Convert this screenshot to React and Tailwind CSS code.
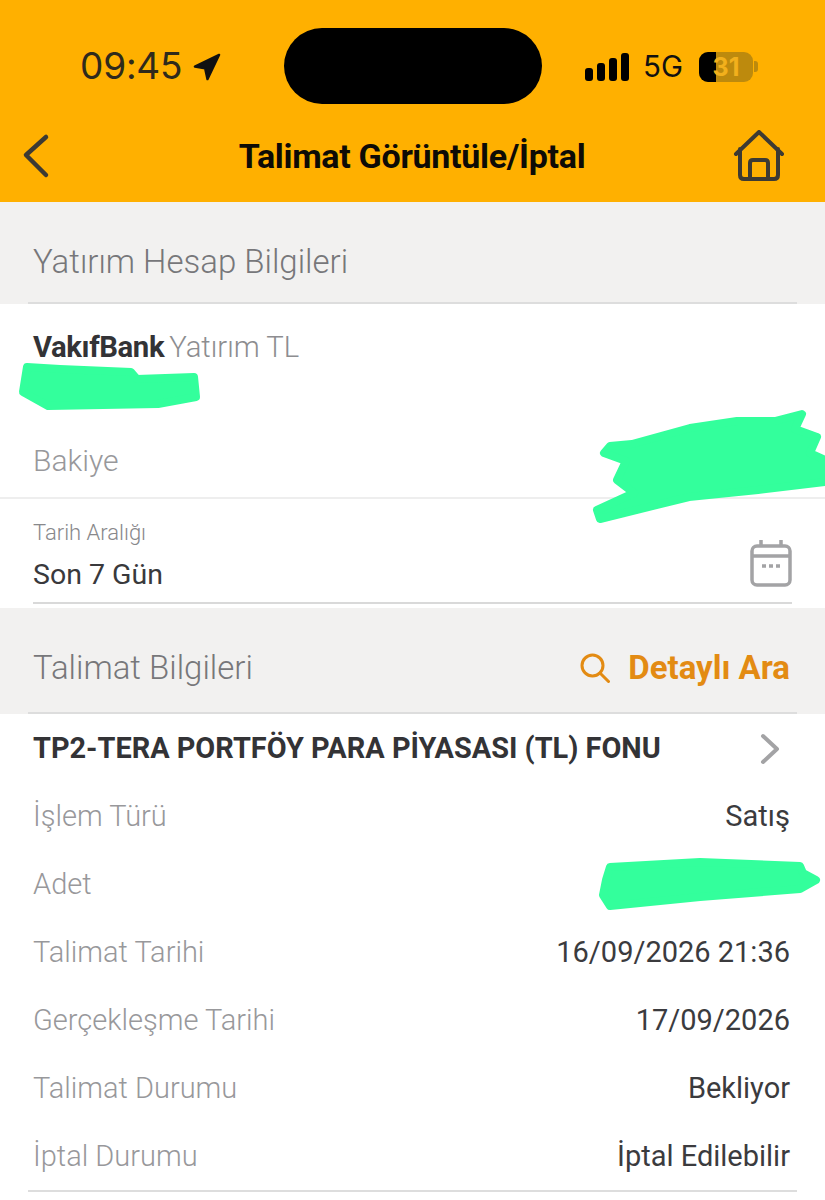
const rows = [
    { label: 'İşlem Türü', value: 'Satış' },
    { label: 'Adet', value: '' },
    { label: 'Talimat Tarihi', value: '16/09/2026 21:36' },
    { label: 'Gerçekleşme Tarihi', value: '17/09/2026' },
    { label: 'Talimat Durumu', value: 'Bekliyor' },
    { label: 'İptal Durumu', value: 'İptal Edilebilir' },
];

// marker scribbles, in page coordinates
const scribbles = [
    'M27 367 L60 369 L131 372 L137 379 L194 377 L196 397 L158 404 L48 406 L23 392 Z',
    'M802 414 L775 421 L737 421 L690 428 L632 444 L610 446 L604 453 L626 461 L617 480 L634 493 L597 510 L600 519 L689 497 L758 490 L825 482 L825 460 L810 453 L817 437 L795 429 Z',
    'M610 867 L700 862 L800 866 L803 873 L816 880 L800 889 L700 897 L610 906 L603 895 L606 880 Z',
];

const StatusBar = () => (
    <div className="relative h-[118px] shrink-0">
        <div className="absolute left-[80px] top-[46px] flex items-center gap-[11px]">
            <span className="font-['Inter',sans-serif] text-[37px] leading-[40px] tracking-[-0.2px] text-[#2f2a1c]">09:45</span>
            <svg width="28" height="28" viewBox="0 0 30 30" className="mt-[1px]">
                <path d="M28 2 L2 14.5 L13 16.5 L15.5 28 Z" fill="#111" stroke="#111" strokeWidth="2.5" strokeLinejoin="round" />
            </svg>
        </div>
        <div className="absolute left-[284px] top-[28px] h-[76px] w-[258px] rounded-[38px] bg-black" />
        <div className="absolute left-[585px] top-[53px] flex items-end gap-[4px]">
            <div className="h-[13px] w-[8px] rounded-[3px] bg-black" />
            <div className="h-[18px] w-[8px] rounded-[3px] bg-black" />
            <div className="h-[23px] w-[8px] rounded-[3px] bg-black" />
            <div className="h-[28px] w-[8px] rounded-[3px] bg-black" />
        </div>
        <span className="absolute left-[643px] top-[48px] font-['Inter',sans-serif] text-[29.5px] leading-[36px] text-[#111]">5G</span>
        <div className="absolute left-[699px] top-[52px] flex h-[30px] w-[54px] items-center justify-center overflow-hidden rounded-[9px] bg-[#bd8a0d]">
            <div className="absolute left-0 top-0 h-full w-[17px] bg-black" />
            <span className="relative font-['Inter',sans-serif] text-[25px] font-bold leading-[30px] text-[#f2b01c]">31</span>
        </div>
        <div className="absolute left-[754px] top-[61px] h-[11px] w-[4px] rounded-r-[3px] bg-[#bd8a0d]" />
    </div>
);

const App = () => {
    return (
        <div className="relative flex h-[1200px] w-[825px] flex-col overflow-hidden bg-white font-['Roboto',sans-serif]">
            <div className="flex h-[202px] shrink-0 flex-col bg-[#ffb000]">
                <StatusBar />
                <div className="mt-[10px] flex items-center justify-between pl-[21px] pr-[40px]">
                    <svg width="30" height="46" viewBox="0 0 30 46" fill="none">
                        <path d="M25 4 L5 22 L25 42" stroke="#3d3a33" strokeWidth="4.5" strokeLinecap="round" strokeLinejoin="round" />
                    </svg>
                    <h1 className="ml-[40px] text-[34px] font-bold leading-[56px] tracking-[-0.3px] text-[#0d0b06]">Talimat Görüntüle/İptal</h1>
                    <svg width="52" height="52" viewBox="0 0 52 52" fill="none">
                        <path d="M3 24 L26 2 L49 24 M7 19 V45 Q7 49 11 49 H41 Q45 49 45 45 V19 M17 49 V33 Q17 30 20 30 H32 Q35 30 35 33 V49" stroke="#3d3a33" strokeWidth="4" strokeLinecap="round" strokeLinejoin="round" />
                    </svg>
                </div>
            </div>

            <div className="h-[102px] shrink-0 bg-[#f2f1f0] px-[28px]">
                <div className="flex h-full items-center border-b-2 border-[#dddddd] pl-[5px] pt-[20px]">
                    <span className="text-[33px] font-light text-[#77777a]">Yatırım Hesap Bilgileri</span>
                </div>
            </div>

            <div className="flex h-[195px] shrink-0 flex-col border-b-2 border-[#eeeeee] pl-[33px]">
                <div className="mt-[25px] flex items-baseline gap-[5px] text-[29.3px] leading-[36px]">
                    <span className="font-bold tracking-[-0.4px] text-[#333336]">VakıfBank</span>
                    <span className="font-light text-[#8d8d90]">Yatırım TL</span>
                </div>
                <span className="mt-[77px] text-[30px] font-light leading-[38px] text-[#98989b]">Bakiye</span>
            </div>

            <div className="flex h-[109px] shrink-0 flex-col">
                <div className="mx-[33px] flex h-[105px] items-end justify-between border-b-2 border-[#d9d9d9] pb-[9px]">
                    <div className="flex flex-col">
                        <span className="text-[22px] font-light leading-[26px] text-[#88888b]">Tarih Aralığı</span>
                        <span className="mt-[11px] text-[28.5px] leading-[36px] text-[#39393c]">Son 7 Gün</span>
                    </div>
                    <svg width="42" height="48" viewBox="0 0 42 48" fill="none" className="mb-[6px]">
                        <rect x="2" y="7" width="38" height="39" rx="5" stroke="#a3a3a5" strokeWidth="3.5" />
                        <path d="M2 17 H40 M11 1 V8 M31 1 V8" stroke="#a3a3a5" strokeWidth="3.5" />
                        <path d="M12 27 H16 M19 27 H23 M26 27 H30" stroke="#a3a3a5" strokeWidth="3.5" />
                    </svg>
                </div>
            </div>

            <div className="h-[106px] shrink-0 bg-[#f2f1f0] px-[28px]">
                <div className="flex h-full items-center justify-between border-b-2 border-[#dddddd] pl-[5px] pr-[7px] pt-[16px]">
                    <span className="text-[33px] font-light text-[#77777a]">Talimat Bilgileri</span>
                    <div className="flex items-center gap-[18px]">
                        <svg width="30" height="30" viewBox="0 0 30 30" fill="none">
                            <circle cx="12.5" cy="12.5" r="10.5" stroke="#e38b13" strokeWidth="3" />
                            <path d="M20 20 L28.5 28.5" stroke="#e38b13" strokeWidth="3" strokeLinecap="round" />
                        </svg>
                        <span className="text-[33px] font-bold text-[#e38b13]">Detaylı Ara</span>
                    </div>
                </div>
            </div>

            <div className="mx-[28px] flex h-[478px] flex-col border-b-2 border-[#dddddd]">
                <div className="flex h-[69px] shrink-0 items-center justify-between pl-[5px] pr-[17px]">
                    <span className="text-[28.9px] font-bold text-[#333336]">TP2-TERA PORTFÖY PARA PİYASASI (TL) FONU</span>
                    <svg width="20" height="32" viewBox="0 0 20 32" fill="none">
                        <path d="M3 3 L17 16 L3 29" stroke="#a3a3a5" strokeWidth="4" strokeLinecap="round" strokeLinejoin="round" />
                    </svg>
                </div>
                {rows.map((row) => (
                    <div key={row.label} className="flex h-[68px] shrink-0 items-center justify-between pl-[5px] pr-[7px] text-[29px]">
                        <span className="font-light text-[#98989b]">{row.label}</span>
                        <span className="text-[#3b3b3e]">{row.value}</span>
                    </div>
                ))}
            </div>

            <svg className="absolute left-0 top-0" width="825" height="1200" viewBox="0 0 825 1200">
                {scribbles.map((d) => (
                    <path key={d} d={d} fill="#33ff9c" stroke="#33ff9c" strokeWidth="8" strokeLinejoin="round" />
                ))}
            </svg>
        </div>
    );
};

export default App;
